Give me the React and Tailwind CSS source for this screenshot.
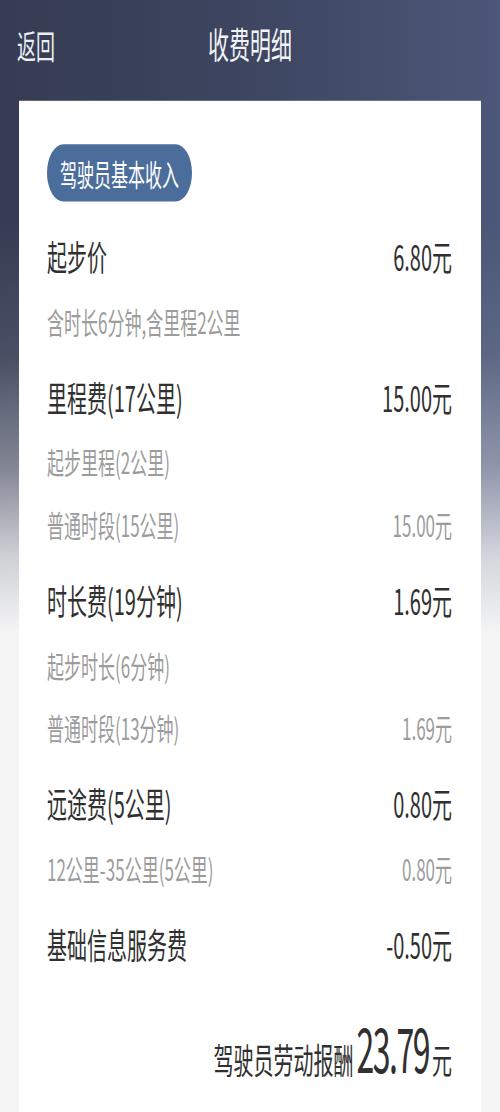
export default function App() {
  const MainRow = ({ label, value, first }) => (
    <div
      className={`flex h-[38px] items-center justify-between text-[20px] text-[#303030] ${
        first ? "mt-[13px]" : "mt-[7px]"
      }`}
    >
      <span>{label}</span>
      <span>{value}</span>
    </div>
  );
  const SubRow = ({ label, value }) => (
    <div className="flex h-[36px] items-center justify-between text-[17px] text-[#9c9c9c]">
      <span>{label}</span>
      {value ? <span>{value}</span> : null}
    </div>
  );

  return (
    <div className="h-[1112px] w-[500px] overflow-hidden bg-[#f5f5f6]">
      <div className="flex h-[640px] origin-top scale-y-[1.7375] flex-col bg-[linear-gradient(180deg,rgba(245,245,246,0)_0%,rgba(245,245,246,0)_20%,rgba(245,245,246,0.1)_32%,rgba(245,245,246,0.4)_42%,rgba(245,245,246,0.8)_50%,#f5f5f6_57%),linear-gradient(90deg,#353c53_0%,#3d4560_50%,#4c5779_100%)] font-['Noto_Sans_CJK_SC','Noto_Sans',sans-serif]">
        <header className="grid h-[58px] shrink-0 grid-cols-[1fr_auto_1fr] items-center px-[17px] pb-[6px]">
          <span className="text-[19px] text-[#eceef3]">返回</span>
          <h1 className="text-[21px] font-normal text-[#f2f3f6]">收费明细</h1>
          <span />
        </header>
        <main className="mx-[19px] flex-1 bg-white pl-[28px] pr-[29px]">
          <div className="pt-[25px]">
            <span className="inline-flex h-[33px] items-center rounded-full bg-[#4b6d9c] px-[13px] text-[17px] text-white">
              驾驶员基本收入
            </span>
          </div>
          <MainRow first label="起步价" value="6.80元" />
          <SubRow label="含时长6分钟,含里程2公里" />
          <MainRow label="里程费(17公里)" value="15.00元" />
          <SubRow label="起步里程(2公里)" />
          <SubRow label="普通时段(15公里)" value="15.00元" />
          <MainRow label="时长费(19分钟)" value="1.69元" />
          <SubRow label="起步时长(6分钟)" />
          <SubRow label="普通时段(13分钟)" value="1.69元" />
          <MainRow label="远途费(5公里)" value="0.80元" />
          <SubRow label="12公里-35公里(5公里)" value="0.80元" />
          <MainRow label="基础信息服务费" value="-0.50元" />
          <div className="mt-[21px] flex h-[44px] items-center justify-end text-[#303030]">
            <div className="flex items-baseline">
              <span className="text-[20px]">驾驶员劳动报酬</span>
              <span className="mx-[3px] inline-block origin-bottom scale-y-[1.12] text-[32px] leading-none tracking-[-1.5px]">
                23.79
              </span>
              <span className="text-[20px]">元</span>
            </div>
          </div>
        </main>
      </div>
    </div>
  );
}
